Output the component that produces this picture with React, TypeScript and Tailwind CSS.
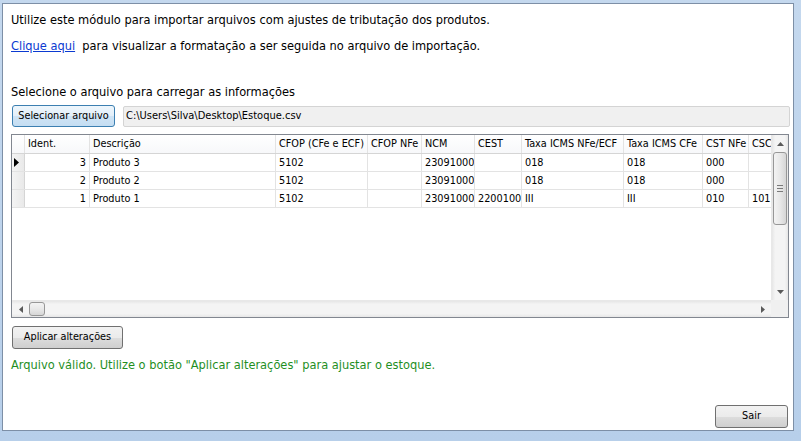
import React from "react"

const font = { fontFamily: '"DejaVu Sans Condensed", "Liberation Sans", sans-serif' }

const columns = [
  { key: "ident", label: "Ident.", width: "w-[65px]", align: "right" },
  { key: "desc", label: "Descrição", width: "w-[186px]", align: "left" },
  { key: "cfopCfe", label: "CFOP (CFe e ECF)", width: "w-[92px]", align: "left" },
  { key: "cfopNfe", label: "CFOP NFe", width: "w-[54px]", align: "left" },
  { key: "ncm", label: "NCM", width: "w-[53px]", align: "left" },
  { key: "cest", label: "CEST", width: "w-[47px]", align: "left" },
  { key: "taxaNfe", label: "Taxa ICMS NFe/ECF", width: "w-[102px]", align: "left" },
  { key: "taxaCfe", label: "Taxa ICMS CFe", width: "w-[79px]", align: "left" },
  { key: "cstNfe", label: "CST NFe", width: "w-[46px]", align: "left" },
  { key: "csc", label: "CSC", width: "w-[50px]", align: "left" },
]

const rows: Record<string, string>[] = [
  { ident: "3", desc: "Produto 3", cfopCfe: "5102", cfopNfe: "", ncm: "23091000", cest: "", taxaNfe: "018", taxaCfe: "018", cstNfe: "000", csc: "" },
  { ident: "2", desc: "Produto 2", cfopCfe: "5102", cfopNfe: "", ncm: "23091000", cest: "", taxaNfe: "018", taxaCfe: "018", cstNfe: "000", csc: "" },
  { ident: "1", desc: "Produto 1", cfopCfe: "5102", cfopNfe: "", ncm: "23091000", cest: "2200100", taxaNfe: "III", taxaCfe: "III", cstNfe: "010", csc: "101" },
]

function WinButton({ label, className, focused }: { label: string; className: string; focused?: boolean }) {
  return (
    <button
      className={
        "flex items-center justify-center rounded-[3px] border text-[10.8px] text-black " +
        (focused
          ? "border-[#3c7fb1] bg-[linear-gradient(#eef6fc_0%,#e3eff9_50%,#cfe4f5_51%,#c4ddf2_100%)] "
          : "border-[#707070] bg-[linear-gradient(#f2f2f2_0%,#ebebeb_50%,#dddddd_51%,#cfcfcf_100%)] ") +
        className
      }
      style={font}
    >
      {label}
    </button>
  )
}

function Arrow({ dir }: { dir: "up" | "down" | "left" | "right" }) {
  const paths = {
    up: "M0 4 L3.5 0 L7 4 Z",
    down: "M0 0 L7 0 L3.5 4 Z",
    left: "M4 0 L4 7 L0 3.5 Z",
    right: "M0 0 L4 3.5 L0 7 Z",
  }
  const vertical = dir === "up" || dir === "down"
  return (
    <svg width={vertical ? 7 : 4} height={vertical ? 4 : 7} viewBox={vertical ? "0 0 7 4" : "0 0 4 7"}>
      <path d={paths[dir]} fill="#5a5a5a" />
    </svg>
  )
}

function DataGrid() {
  return (
    <div className="mt-[7px] flex h-[184px] w-[778px] flex-col border border-[#828790] bg-white text-[10.8px] text-black">
      <div className="flex h-[165px]">
        <div className="w-[759px] overflow-hidden">
          <div className="flex h-[19px] border-b border-[#d5d5d5] bg-[linear-gradient(#ffffff,#f7f8fa)]">
            <div className="h-full w-[13px] shrink-0 border-r border-[#e3e3e3]" />
            {columns.map((c) => (
              <div
                key={c.key}
                className={c.width + " shrink-0 overflow-hidden whitespace-nowrap border-r border-[#e3e3e3] pl-[3px] leading-[18px]"}
              >
                {c.label}
              </div>
            ))}
          </div>
          {rows.map((r, i) => (
            <div key={i} className="flex h-[18px] border-b border-[#e3e3e3]">
              <div className="flex h-full w-[13px] shrink-0 items-center border-r border-[#d5d5d5] bg-[linear-gradient(90deg,#f4f4f4,#e9e9e9)] pl-[2px]">
                {i === 0 && (
                  <svg width="5" height="9" viewBox="0 0 5 9">
                    <path d="M0 0 L5 4.5 L0 9 Z" fill="#000" />
                  </svg>
                )}
              </div>
              {columns.map((c) => (
                <div
                  key={c.key}
                  className={
                    c.width +
                    " shrink-0 overflow-hidden whitespace-nowrap border-r border-[#e3e3e3] leading-[17px] " +
                    (c.align === "right" ? "pr-[3px] text-right" : "pl-[3px]")
                  }
                >
                  {r[c.key]}
                </div>
              ))}
            </div>
          ))}
        </div>
        <div className="flex w-[17px] flex-col items-center border-l border-[#e8e8e8] bg-[linear-gradient(90deg,#e6e6e6,#f4f4f4_20%,#f4f4f4_80%,#e6e6e6)]">
          <div className="flex h-[17px] items-center justify-center">
            <Arrow dir="up" />
          </div>
          <div className="flex h-[73px] w-[14px] flex-col items-center justify-center gap-[2px] rounded-[3px] border border-[#979797] bg-[linear-gradient(90deg,#f3f3f3,#e8e8e8_50%,#d6d6d6)]">
            <div className="h-px w-[6px] bg-[#7a7a7a]" />
            <div className="h-px w-[6px] bg-[#7a7a7a]" />
            <div className="h-px w-[6px] bg-[#7a7a7a]" />
          </div>
          <div className="flex-1" />
          <div className="flex h-[17px] items-center justify-center">
            <Arrow dir="down" />
          </div>
        </div>
      </div>
      <div className="flex h-[17px]">
        <div className="flex w-[759px] items-center border-t border-[#e8e8e8] bg-[linear-gradient(#e6e6e6,#f4f4f4_20%,#f4f4f4_80%,#e6e6e6)]">
          <div className="flex w-[17px] items-center justify-center">
            <Arrow dir="left" />
          </div>
          <div className="h-[14px] w-[16px] rounded-[3px] border border-[#979797] bg-[linear-gradient(#f3f3f3,#e8e8e8_50%,#d6d6d6)]" />
          <div className="flex-1" />
          <div className="flex w-[17px] items-center justify-center">
            <Arrow dir="right" />
          </div>
        </div>
        <div className="w-[17px] bg-[#f0f0f0]" />
      </div>
    </div>
  )
}

export default function App() {
  return (
    <div className="h-[441px] w-[801px] bg-[linear-gradient(#c4d8ee,#b7cfea)] pb-[10px] pl-[2px] pr-[7px] pt-[3px]">
      <div className="flex h-full w-full flex-col border border-[#7d8fa6] bg-white pl-[8px] text-[12.7px] text-black" style={font}>
        <div className="mt-[8px] h-[15px] leading-[15px]">
          Utilize este módulo para importar arquivos com ajustes de tributação dos produtos.
        </div>
        <div className="mt-[11px] h-[15px] leading-[15px]">
          <span className="text-[#0b3ad1] underline">Clique aqui</span>
          <span className="whitespace-pre">{"  "}para visualizar a formatação a ser seguida no arquivo de importação.</span>
        </div>
        <div className="mt-[31px] h-[15px] leading-[15px]">Selecione o arquivo para carregar as informações</div>
        <div className="mt-[6px] flex h-[22px] items-center">
          <WinButton label="Selecionar arquivo" focused className="ml-px h-[22px] w-[103px]" />
          <div className="ml-[8px] flex h-[21px] w-[667px] items-center rounded-[2px] border border-[#d4d4d4] bg-[#f0f0f0] pl-[2px] text-[11px]">
            C:\Users\Silva\Desktop\Estoque.csv
          </div>
        </div>
        <DataGrid />
        <WinButton label="Aplicar alterações" className="ml-px mt-[8px] h-[23px] w-[111px]" />
        <div className="mt-[8px] h-[15px] leading-[15px] text-[#1f8f1f]">
          Arquivo válido. Utilize o botão "Aplicar alterações" para ajustar o estoque.
        </div>
        <div className="mt-[33px] flex pr-[5px]">
          <WinButton label="Sair" className="ml-auto h-[23px] w-[73px]" />
        </div>
      </div>
    </div>
  )
}
